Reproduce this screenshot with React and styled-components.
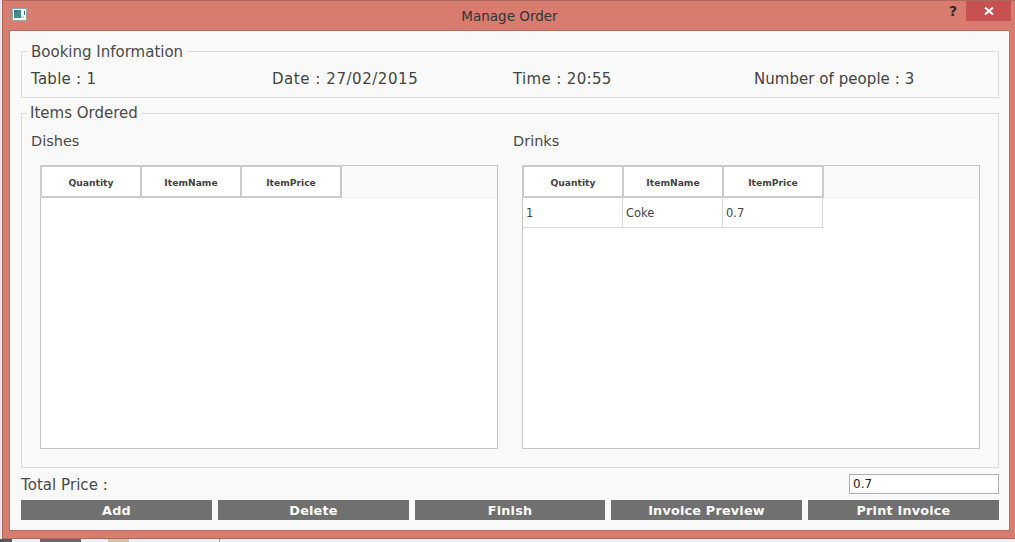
import React from "react";
import styled, { createGlobalStyle } from "styled-components";

const Global = createGlobalStyle`
  html, body { margin: 0; padding: 0; width: 1015px; height: 542px; overflow: hidden; background: #e9e9e9; }
  #root { width: 1015px; height: 542px; }
`;
const Page = styled.div`
  width: 1015px; height: 542px; box-sizing: border-box; padding-left: 2px;
  font-family: "DejaVu Sans", Verdana, sans-serif; color: #444;
`;
const Win = styled.div`
  width: 1013px; height: 539px; box-sizing: border-box; background: #d77c6f;
  border-top: 1px solid #b0685e; border-left: 1px solid #b0685e; border-bottom: 1px solid #b0685e;
  padding: 0 5px 7px 6px; display: flex; flex-direction: column;
`;
const Desk = styled.div`
  height: 3px; margin-left: -2px; display: flex; background: #f4f4f4;
`;
const DeskBit = styled.div`
  width: ${p => p.$w}px; background: ${p => p.$c};
`;
const TitleBar = styled.div`
  height: 29px; flex: none; display: flex; align-items: center; position: relative;
`;
const AppIcon = styled.svg`width: 15px; height: 13px; margin: -2px 0 0 3px; display: block;`;
const Title = styled.div`
  position: absolute; left: 0; right: 0; top: 7px; text-align: center; font-size: 13.5px; color: #333;
`;
const Help = styled.div`
  position: absolute; right: 53px; top: 2px; font: bold 14px "DejaVu Sans", sans-serif; color: #2a2a2a;
`;
const Close = styled.div`
  position: absolute; right: -1px; top: 0; width: 45px; height: 20px; background: #c75050;
  display: flex; align-items: center; justify-content: center;
`;
const Client = styled.div`
  flex: 1; background: #f9f9f9; border: 1px solid #b76d62; border-right-color: #c0766a; padding: 0 10px 0 11px;
  display: flex; flex-direction: column; min-height: 0;
`;
const Group = styled.fieldset`
  margin: 0; padding: 0; border: 1px solid #dcdcdc; min-inline-size: 0; box-sizing: border-box;
  height: ${p => p.$h}px; margin-top: ${p => p.$mt}px;
`;
const Legend = styled.legend`
  font-size: 15px; line-height: 18px; padding: ${p => p.$pt || 0}px 4px 0 3px; margin-left: ${p => p.$ml || 6}px; color: #4a4a4a;
`;
const InfoRow = styled.div`
  display: grid; grid-template-columns: repeat(4, 241px); padding: 9px 0 0 9px;
  font-size: 15px; line-height: 18px;
`;
const InfoItem = styled.div`
  letter-spacing: ${p => p.$ls}px; white-space: nowrap;
`;
const Columns = styled.div`
  display: grid; grid-template-columns: 458px 458px; column-gap: 24px; padding: 0 0 0 18px;
`;
const Col = styled.div`display: flex; flex-direction: column;`;
const ColTitle = styled.div`
  font-size: 14.5px; line-height: 18px; margin: 10px 0 15px -9px; color: #4a4a4a;
`;
const TableBox = styled.div`
  width: 458px; height: 284px; box-sizing: border-box; background: #fff; border: 1px solid #c4c4c4;
`;
const HeadBand = styled.div`
  height: 32px; background: #f9f9f9; border-bottom: 1px solid #f0f0f0; display: flex; box-sizing: border-box;
`;
const HeadCell = styled.div`
  width: ${p => p.$first ? 102 : 100}px; height: 33px; margin: -1px 0 0 ${p => p.$first ? -1 : 0}px;
  box-sizing: border-box; background: #fff; border: 2px solid #cbcbcb; border-left-width: ${p => p.$first ? 2 : 0}px;
  padding-top: 1px; flex: none;
  display: flex; align-items: center; justify-content: center; font-size: 9.2px; font-weight: bold; color: #444;
`;
const DataRow = styled.div`display: flex;`;
const DataCell = styled.div`
  width: 100px; height: 30px; box-sizing: border-box; border-right: 1px solid #dadada; border-bottom: 1px solid #dadada;
  display: flex; align-items: center; padding-left: 3px; font-size: 11.5px; color: #444;
`;
const TotalRow = styled.div`
  display: flex; align-items: center; justify-content: space-between; height: 20px; margin-top: 6px; font-size: 15px; color: #4a4a4a;
`;
const TotalLabel = styled.span`padding-top: 1px; margin-top: 1px; letter-spacing: 0.05px;`;
const PriceInput = styled.div`
  width: 150px; height: 20px; box-sizing: border-box; background: #fff; border: 1px solid #b0b0b8;
  display: flex; align-items: center; padding-left: 3px; font-size: 12px; color: #222;
`;
const Buttons = styled.div`display: grid; grid-template-columns: 191px 191px 190px 191px 191px; column-gap: 6px; margin-top: 6px;`;
const Btn = styled.div`
  height: 20px; background: #707070; color: #fff; font-size: 12.8px; font-weight: bold;
  display: flex; align-items: center; justify-content: center; letter-spacing: 0.2px;
`;

const Table = ({ rows = [] }) => (
  <TableBox>
    <HeadBand>
      <HeadCell $first>Quantity</HeadCell>
      <HeadCell>ItemName</HeadCell>
      <HeadCell>ItemPrice</HeadCell>
    </HeadBand>
    {rows.map((r, i) => (
      <DataRow key={i}>{r.map(c => <DataCell key={c}>{c}</DataCell>)}</DataRow>
    ))}
  </TableBox>
);

export default function App() {
  return (
    <Page>
      <Global />
      <Win>
        <TitleBar>
          <AppIcon viewBox="0 0 15 13">
            <rect x="0.5" y="0.5" width="14" height="12" fill="#f2f5f5" stroke="#9aa6a8" />
            <rect x="2" y="2" width="7" height="8" fill="#3f8f8a" />
            <rect x="2" y="2" width="4" height="3" fill="#4a6f9c" />
            <rect x="12" y="3" width="1" height="4" fill="#2a6fb0" />
            <rect x="9" y="8" width="3" height="2" fill="#cfd6d6" />
          </AppIcon>
          <Title>Manage Order</Title>
          <Help>?</Help>
          <Close>
            <svg width="12" height="10" viewBox="0 0 12 10">
              <path d="M2 1.5 L10 8.5 M10 1.5 L2 8.5" stroke="#fff" strokeWidth="2" />
            </svg>
          </Close>
        </TitleBar>
        <Client>
          <Group $h={57} $mt={10}>
            <Legend $pt={2}>Booking Information</Legend>
            <InfoRow>
              <InfoItem $ls={0.25}>Table : 1</InfoItem>
              <InfoItem $ls={0.55}>Date : 27/02/2015</InfoItem>
              <InfoItem $ls={0.35}>Time : 20:55</InfoItem>
              <InfoItem $ls={0.05}>Number of people : 3</InfoItem>
            </InfoRow>
          </Group>
          <Group $h={364} $mt={6}>
            <Legend $ml={5}>Items Ordered</Legend>
            <Columns>
              <Col>
                <ColTitle>Dishes</ColTitle>
                <Table />
              </Col>
              <Col>
                <ColTitle>Drinks</ColTitle>
                <Table rows={[["1", "Coke", "0.7"]]} />
              </Col>
            </Columns>
          </Group>
          <TotalRow>
            <TotalLabel>Total Price :</TotalLabel>
            <PriceInput>0.7</PriceInput>
          </TotalRow>
          <Buttons>
            <Btn>Add</Btn>
            <Btn>Delete</Btn>
            <Btn>Finish</Btn>
            <Btn>Invoice Preview</Btn>
            <Btn>Print Invoice</Btn>
          </Buttons>
        </Client>
      </Win>
      <Desk>
        <DeskBit $w={12} $c="#5a5a5a" />
        <DeskBit $w={28} $c="#f4f4f4" />
        <DeskBit $w={41} $c="#6a6a6a" />
        <DeskBit $w={27} $c="#f4f4f4" />
        <DeskBit $w={21} $c="#c9c6ab" />
        <DeskBit $w={90} $c="#f4f4f4" />
        <DeskBit $w={1} $c="#9a9a9a" />
      </Desk>
    </Page>
  );
}
